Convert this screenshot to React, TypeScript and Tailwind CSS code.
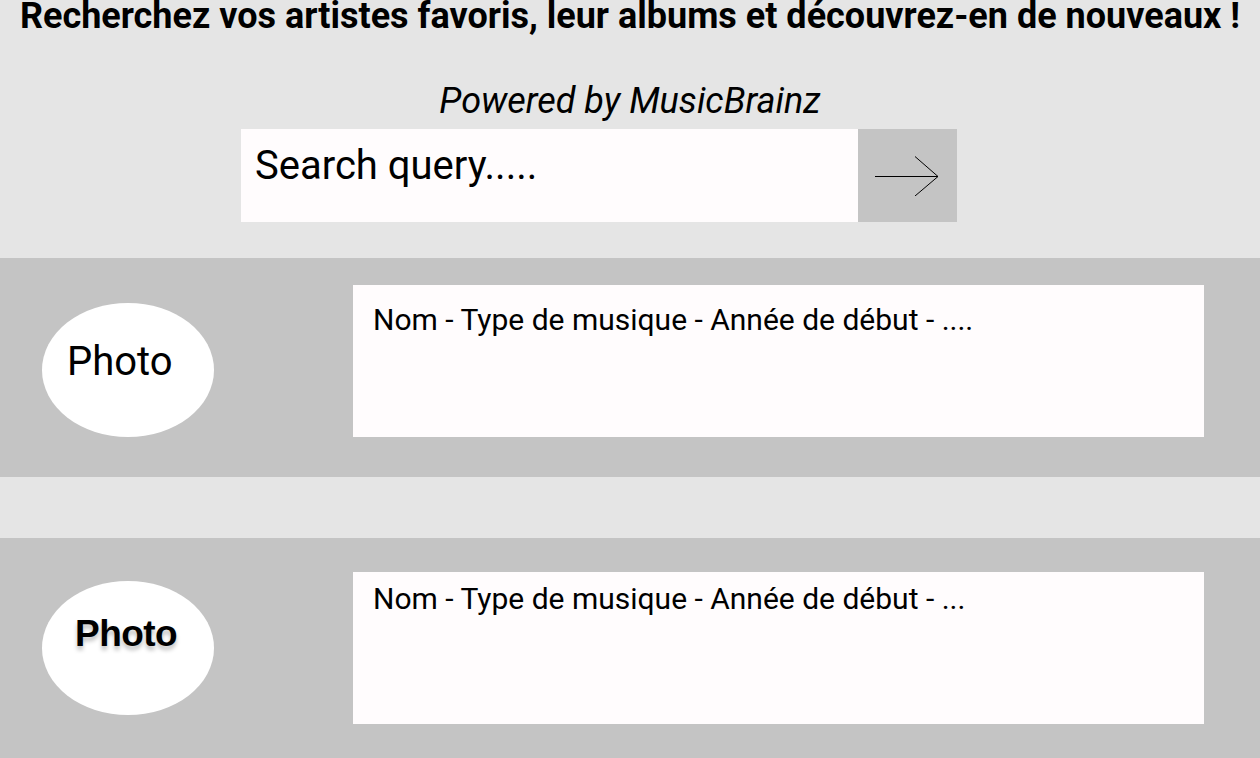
import React from "react";

function Arrow() {
  return (
    <svg width="64" height="40" viewBox="0 0 64 40" fill="none">
      <line x1="0" y1="20.5" x2="63" y2="20.5" stroke="#000" strokeWidth="1" />
      <polyline points="40,0.5 63,20.5 40,40" stroke="#000" strokeWidth="1" fill="none" />
    </svg>
  );
}

export default function App() {
  return (
    <div className="w-[1260px] h-[758px] overflow-hidden bg-[#e5e5e5] text-black" style={{ fontFamily: "Roboto, 'Noto Sans', sans-serif" }}>
      <h1 className="text-center text-[36px] font-bold leading-[32px] whitespace-nowrap">
        Recherchez vos artistes favoris, leur albums et découvrez-en de nouveaux !
      </h1>
      <p className="text-center italic text-[36px] leading-none mt-[51px]">Powered by MusicBrainz</p>
      <div className="flex ml-[241px] mt-[10px] h-[93px]">
        <div className="w-[617px] bg-[#fffcfd] pl-[14px] pt-[17px]">
          <span className="text-[40px] leading-none">Search query.....</span>
        </div>
        <div className="w-[99px] bg-[#c4c4c4] flex items-center pl-[17px]">
          <Arrow />
        </div>
      </div>

      <div className="mt-[36px] flex h-[219px] bg-[#c4c4c4]">
        <div className="ml-[42px] mt-[45px] w-[172px] h-[134px] rounded-[50%] bg-white pl-[25px] pt-[39px]">
          <span className="block text-[40px] leading-none">Photo</span>
        </div>
        <div className="ml-[139px] mt-[27px] w-[851px] h-[152px] bg-[#fffcfd] pl-[20px] pt-[20px]">
          <span className="block text-[30px] leading-none">Nom - Type de musique - Année de début - ....</span>
        </div>
      </div>

      <div className="h-[61px]" />

      <div className="flex h-[220px] bg-[#c4c4c4]">
        <div className="ml-[42px] mt-[43px] w-[172px] h-[134px] rounded-[50%] bg-white flex justify-center pt-[34px] pr-[4px]">
          <span
            className="block text-[37px] font-bold leading-none tracking-[-0.6px] [text-shadow:0_4px_4px_rgba(0,0,0,0.25)]"
            style={{ fontFamily: "'Liberation Sans', Arial, sans-serif" }}
          >
            Photo
          </span>
        </div>
        <div className="ml-[139px] mt-[34px] w-[851px] h-[152px] bg-[#fffcfd] pl-[20px] pt-[12px]">
          <span className="block text-[30px] leading-none">Nom - Type de musique - Année de début - ...</span>
        </div>
      </div>
    </div>
  );
}
